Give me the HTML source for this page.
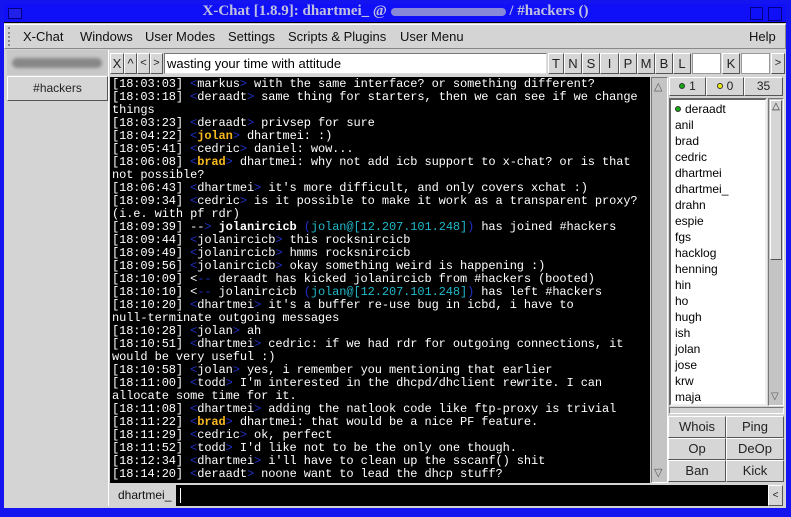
<!DOCTYPE html>
<html><head><meta charset="utf-8"><style>
*{margin:0;padding:0;box-sizing:border-box}
body{width:791px;height:517px;background:#1414f0;position:relative;overflow:hidden;font-family:"Liberation Sans",sans-serif;font-size:12px;color:#000}
.a{position:absolute}
.btn{position:absolute;background:#d6d6d6;border:1px solid;border-color:#fff #555 #555 #fff;text-align:center;font-size:13px;color:#222}
.sunk{position:absolute;border:1px solid;border-color:#777 #fff #fff #777}
#chat{position:absolute;left:110px;top:77px;width:540px;height:406px;background:#000;color:#fff;font-family:"Liberation Mono",monospace;font-size:12px;line-height:13px;padding:1px 0 0 2px;white-space:pre;overflow:hidden;letter-spacing:-0.1px}
.b{color:#2030c8}.y{color:#f8b820;font-weight:bold}.c{color:#20b8c8}.w{font-weight:bold}
.ul div{height:16px;line-height:16px;padding-left:4px;font-size:12px}
.dot{display:inline-block;width:6px;height:6px;border-radius:3px;margin-right:4px;vertical-align:1px;border:1px solid #333}
</style></head><body>
<div class="a" style="left:4px;top:4px;width:782px;height:504px;background:#d4d4d4"></div>
<div class="a" style="left:4px;top:4px;width:782px;height:19px;background:#1010f8;border-bottom:1px solid #000"></div>
<div class="a" style="left:8px;top:8px;width:14px;height:11px;border:1px solid #000080;background:#2020e8"></div>
<div class="a" style="left:0;top:3px;width:791px;text-align:center;font-family:'Liberation Serif',serif;font-weight:bold;font-size:15px;color:#c0c0e0">X-Chat [1.8.9]: dhartmei_ @ <span style="display:inline-block;width:115px;height:8px;background:#8888d8;border-radius:4px;vertical-align:middle"></span> / #hackers ()</div>
<div class="a" style="left:750px;top:7px;width:13px;height:13px;border:1px solid #000080"></div>
<div class="a" style="left:768px;top:7px;width:14px;height:14px;border:1px solid #000080"></div>
<!-- menubar -->
<div class="a" style="left:4px;top:24px;width:782px;height:25px;background:#d4d4d4;border:1px solid;border-color:#fff #888 #888 #fff"></div>
<div class="a" style="left:8px;top:27px;width:4px;height:19px;border-left:2px dotted #888"></div>
<div class="a" style="top:29px;left:23px;font-size:13px;color:#111">X-Chat</div>
<div class="a" style="top:29px;left:80px;font-size:13px;color:#111">Windows</div>
<div class="a" style="top:29px;left:145px;font-size:13px;color:#111">User Modes</div>
<div class="a" style="top:29px;left:228px;font-size:13px;color:#111">Settings</div>
<div class="a" style="top:29px;left:288px;font-size:13px;color:#111">Scripts &amp; Plugins</div>
<div class="a" style="top:29px;left:400px;font-size:13px;color:#111">User Menu</div>
<div class="a" style="top:29px;left:749px;font-size:13px;color:#111">Help</div>
<!-- left panel -->
<div class="a" style="left:7px;top:50px;width:101px;height:25px;background:#c8c8c8"></div>
<div class="a" style="left:12px;top:58px;width:90px;height:10px;background:#888;border-radius:5px;filter:blur(1.5px)"></div>
<div class="btn" style="left:7px;top:76px;width:101px;height:25px;line-height:23px;font-size:12px">#hackers</div>
<div class="a" style="left:108px;top:50px;width:1px;height:456px;background:#fff"></div>
<!-- toolbar -->
<div class="btn" style="left:110px;top:53px;width:14px;height:21px;line-height:19px">X</div>
<div class="btn" style="left:124px;top:53px;width:13px;height:21px;line-height:19px">^</div>
<div class="btn" style="left:137px;top:53px;width:13px;height:21px;line-height:19px;font-size:11px">&lt;</div>
<div class="btn" style="left:150px;top:53px;width:13px;height:21px;line-height:19px;font-size:11px">&gt;</div>
<div class="a" style="left:164px;top:53px;width:383px;height:21px;background:#fff;border:1px solid;border-color:#777 #ddd #ddd #777;font-size:13px;line-height:19px;padding-left:2px">wasting your time with attitude</div>
<div class="btn" style="left:548px;top:53px;width:16px;height:21px;line-height:19px">T</div>
<div class="btn" style="left:564px;top:53px;width:18px;height:21px;line-height:19px">N</div>
<div class="btn" style="left:582px;top:53px;width:18px;height:21px;line-height:19px">S</div>
<div class="btn" style="left:600px;top:53px;width:19px;height:21px;line-height:19px">I</div>
<div class="btn" style="left:619px;top:53px;width:18px;height:21px;line-height:19px">P</div>
<div class="btn" style="left:637px;top:53px;width:18px;height:21px;line-height:19px">M</div>
<div class="btn" style="left:655px;top:53px;width:18px;height:21px;line-height:19px">B</div>
<div class="btn" style="left:673px;top:53px;width:18px;height:21px;line-height:19px">L</div>
<div class="a" style="left:692px;top:53px;width:29px;height:21px;background:#fff;border:1px solid #999"></div>
<div class="btn" style="left:722px;top:53px;width:18px;height:21px;line-height:19px">K</div>
<div class="a" style="left:741px;top:53px;width:29px;height:21px;background:#fff;border:1px solid #999"></div>
<div class="btn" style="left:771px;top:53px;width:14px;height:21px;line-height:19px;font-size:11px">&gt;</div>
<!-- chat -->
<div id="chat">[18:03:03] <span class="b">&lt;</span>markus<span class="b">&gt;</span> with the same interface? or something different?
[18:03:18] <span class="b">&lt;</span>deraadt<span class="b">&gt;</span> same thing for starters, then we can see if we change
things
[18:03:23] <span class="b">&lt;</span>deraadt<span class="b">&gt;</span> privsep for sure
[18:04:22] <span class="b">&lt;</span><span class="y">jolan</span><span class="b">&gt;</span> dhartmei: :)
[18:05:41] <span class="b">&lt;</span>cedric<span class="b">&gt;</span> daniel: wow...
[18:06:08] <span class="b">&lt;</span><span class="y">brad</span><span class="b">&gt;</span> dhartmei: why not add icb support to x-chat? or is that
not possible?
[18:06:43] <span class="b">&lt;</span>dhartmei<span class="b">&gt;</span> it's more difficult, and only covers xchat :)
[18:09:34] <span class="b">&lt;</span>cedric<span class="b">&gt;</span> is it possible to make it work as a transparent proxy?
(i.e. with pf rdr)
[18:09:39] --<span class="b">&gt;</span> <span class="w">jolanircicb</span> <span class="b">(</span><span class="c">jolan@[12.207.101.248]</span><span class="b">)</span> has joined #hackers
[18:09:44] <span class="b">&lt;</span>jolanircicb<span class="b">&gt;</span> this rocksnircicb
[18:09:49] <span class="b">&lt;</span>jolanircicb<span class="b">&gt;</span> hmms rocksnircicb
[18:09:56] <span class="b">&lt;</span>jolanircicb<span class="b">&gt;</span> okay something weird is happening :)
[18:10:09] &lt;<span class="b">--</span> deraadt has kicked jolanircicb from #hackers (booted)
[18:10:10] &lt;<span class="b">--</span> jolanircicb <span class="b">(</span><span class="c">jolan@[12.207.101.248]</span><span class="b">)</span> has left #hackers
[18:10:20] <span class="b">&lt;</span>dhartmei<span class="b">&gt;</span> it's a buffer re-use bug in icbd, i have to
null-terminate outgoing messages
[18:10:28] <span class="b">&lt;</span>jolan<span class="b">&gt;</span> ah
[18:10:51] <span class="b">&lt;</span>dhartmei<span class="b">&gt;</span> cedric: if we had rdr for outgoing connections, it
would be very useful :)
[18:10:58] <span class="b">&lt;</span>jolan<span class="b">&gt;</span> yes, i remember you mentioning that earlier
[18:11:00] <span class="b">&lt;</span>todd<span class="b">&gt;</span> I'm interested in the dhcpd/dhclient rewrite. I can
allocate some time for it.
[18:11:08] <span class="b">&lt;</span>dhartmei<span class="b">&gt;</span> adding the natlook code like ftp-proxy is trivial
[18:11:22] <span class="b">&lt;</span><span class="y">brad</span><span class="b">&gt;</span> dhartmei: that would be a nice PF feature.
[18:11:29] <span class="b">&lt;</span>cedric<span class="b">&gt;</span> ok, perfect
[18:11:52] <span class="b">&lt;</span>todd<span class="b">&gt;</span> I'd like not to be the only one though.
[18:12:34] <span class="b">&lt;</span>dhartmei<span class="b">&gt;</span> i'll have to clean up the sscanf() shit
[18:14:20] <span class="b">&lt;</span>deraadt<span class="b">&gt;</span> noone want to lead the dhcp stuff?</div>
<!-- chat scrollbar -->
<div class="sunk" style="left:651px;top:77px;width:17px;height:406px;background:#c4c4c4"></div>
<div class="a" style="left:654px;top:80px;font-size:11px;color:#555">&#9651;</div>
<div class="a" style="left:654px;top:466px;font-size:11px;color:#555">&#9661;</div>
<!-- counters -->
<div class="btn" style="left:669px;top:77px;width:37px;height:19px;line-height:17px;font-size:12px"><span class="dot" style="background:#1a1"></span>1</div>
<div class="btn" style="left:706px;top:77px;width:38px;height:19px;line-height:17px;font-size:12px"><span class="dot" style="background:#ee0"></span>0</div>
<div class="btn" style="left:744px;top:77px;width:39px;height:19px;line-height:17px;font-size:12px">35</div>
<!-- userlist -->
<div class="a ul" style="left:669px;top:98px;width:98px;height:308px;background:#fff;border:2px solid;border-color:#666 #eee #eee #666;overflow:hidden;padding-top:1px">
<div><span class="dot" style="background:#1a1"></span>deraadt</div><div>anil</div><div>brad</div><div>cedric</div><div>dhartmei</div><div>dhartmei_</div><div>drahn</div><div>espie</div><div>fgs</div><div>hacklog</div><div>henning</div><div>hin</div><div>ho</div><div>hugh</div><div>ish</div><div>jolan</div><div>jose</div><div>krw</div><div>maja</div></div>
<div class="sunk" style="left:768px;top:98px;width:16px;height:308px;background:#c4c4c4"></div>
<div class="btn" style="left:770px;top:100px;width:12px;height:160px;font-size:10px;line-height:12px">&#9651;</div>
<div class="a" style="left:771px;top:391px;font-size:10px;color:#555">&#9661;</div>
<div class="sunk" style="left:669px;top:407px;width:115px;height:7px"></div>
<div class="btn" style="left:668px;top:416px;width:58px;height:22px;line-height:20px">Whois</div>
<div class="btn" style="left:726px;top:416px;width:58px;height:22px;line-height:20px">Ping</div>
<div class="btn" style="left:668px;top:438px;width:58px;height:22px;line-height:20px">Op</div>
<div class="btn" style="left:726px;top:438px;width:58px;height:22px;line-height:20px">DeOp</div>
<div class="btn" style="left:668px;top:460px;width:58px;height:22px;line-height:20px">Ban</div>
<div class="btn" style="left:726px;top:460px;width:58px;height:22px;line-height:20px">Kick</div>
<!-- input -->
<div class="a" style="left:118px;top:488px;font-size:12px;color:#111">dhartmei_</div>
<div class="a" style="left:176px;top:485px;width:592px;height:21px;background:#000"></div>
<div class="a" style="left:180px;top:488px;width:1px;height:15px;background:#fff"></div>
<div class="btn" style="left:768px;top:485px;width:15px;height:21px;line-height:19px;font-size:10px">&lt;</div>
</body></html>
